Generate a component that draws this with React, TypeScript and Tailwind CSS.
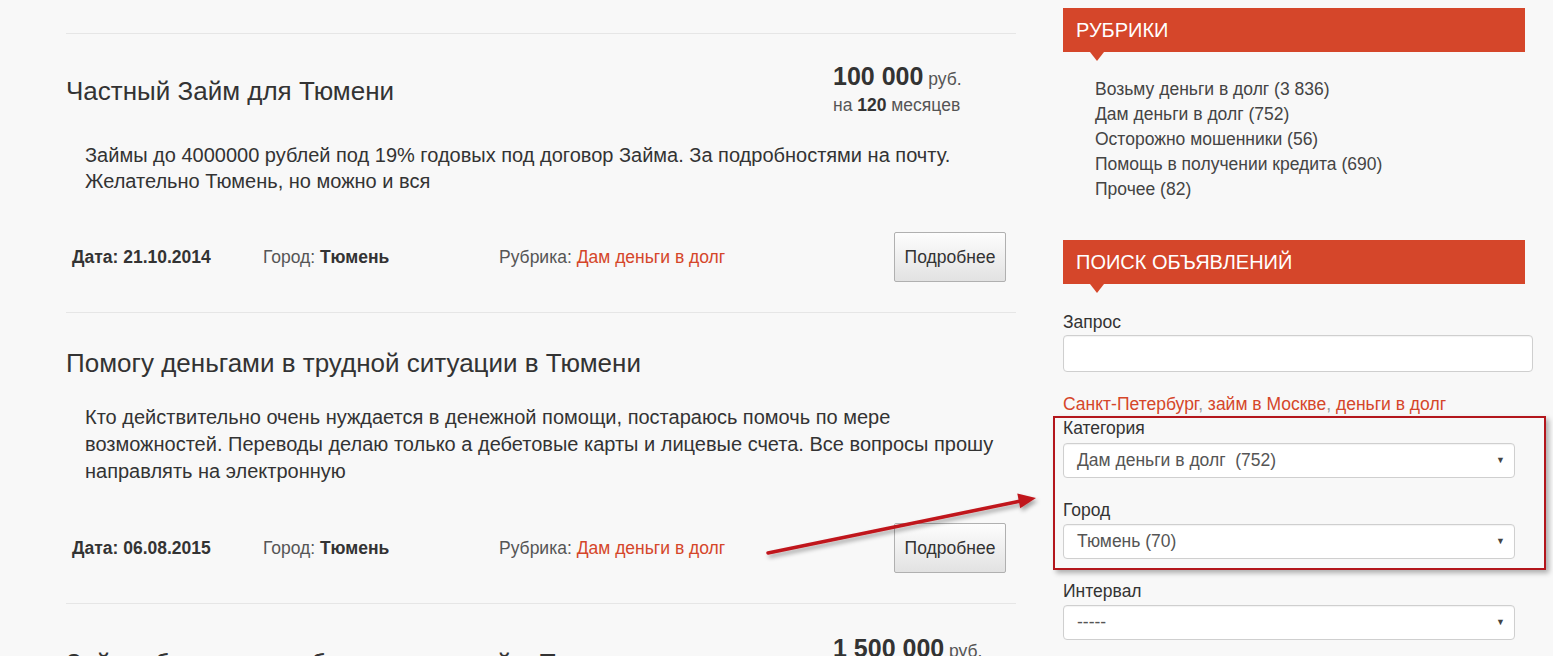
import React from "react";

const RED = "text-[#d5462a]";

function Price({ amount, months }: { amount: string; months?: string }) {
  return (
    <div className="w-[183px] shrink-0 text-[#333]">
      <div className="leading-[24px] whitespace-nowrap">
        <span className="text-[25px] font-bold">{amount}</span>
        <span className="text-[17.5px] text-[#555]"> руб.</span>
      </div>
      {months && (
        <div className="text-[17.5px] leading-[26px] text-[#555] whitespace-nowrap">
          на <b className="text-[#333]">{months}</b> месяцев
        </div>
      )}
    </div>
  );
}

function Meta({ date }: { date: string }) {
  return (
    <div className="mt-[38px] flex h-[50px] items-center pl-[6px] pr-[10px] text-[17.5px] text-[#333]">
      <div className="w-[191px] font-bold">Дата: {date}</div>
      <div className="w-[236px] text-[#555]">
        Город: <b className="text-[#333]">Тюмень</b>
      </div>
      <div className="flex-1 text-[#555]">
        Рубрика: <span className={RED}>Дам деньги в долг</span>
      </div>
      <button className="h-[50px] w-[112px] rounded-[2px] border border-[#b0b0b0] bg-gradient-to-b from-[#fdfdfd] to-[#e2e2e2] text-[17.5px] text-[#333]">
        Подробнее
      </button>
    </div>
  );
}

function Select({ value }: { value: string }) {
  return (
    <div className="flex h-[35px] w-[452px] items-center justify-between rounded-[4px] border border-[#cfcfcf] bg-white pl-[13px] pr-[9px] text-[17.5px] text-[#555] shadow-[inset_0_1px_1px_rgba(0,0,0,0.05)]">
      <span className="whitespace-pre">{value}</span>
      <span className="text-[9px] text-[#444]">▼</span>
    </div>
  );
}

function Header({ title }: { title: string }) {
  return (
    <div className="relative flex h-[44px] w-[462px] items-center bg-[#d5462a] pl-[13px] text-[20px] text-white">
      {title}
      <div className="absolute left-[27px] top-[44px] h-0 w-0 border-l-[7px] border-r-[7px] border-t-[9px] border-l-transparent border-r-transparent border-t-[#d5462a]" />
    </div>
  );
}

export default function App() {
  return (
    <div className="relative flex h-[656px] w-[1553px] overflow-hidden bg-[#f8f8f8] font-['Liberation_Sans',Arial,sans-serif] text-[#333]">
      {/* Left column */}
      <div className="ml-[66px] w-[950px] shrink-0">
        <div className="h-[33px]" />
        {/* Item 1 */}
        <div className="border-t border-[#e6e6e6] pt-[32px]">
          <div className="flex h-[50px] items-center">
            <h2 className="flex-1 text-[26px] leading-[30px] text-[#333]">Частный Займ для Тюмени</h2>
            <Price amount="100 000" months="120" />
          </div>
          <p className="mt-[26px] pl-[19px] pr-[4px] text-[20px] leading-[26px] text-[#333]">
            Займы до 4000000 рублей под 19% годовых под договор Займа. За подробностями на почту. Желательно Тюмень, но можно и вся
          </p>
          <Meta date="21.10.2014" />
          <div className="h-[30px]" />
        </div>
        {/* Item 2 */}
        <div className="border-t border-[#e6e6e6] pt-[35px]">
          <h2 className="text-[26px] leading-[30px] text-[#333]">Помогу деньгами в трудной ситуации в Тюмени</h2>
          <p className="mt-[26px] pl-[19px] pr-[4px] text-[20px] leading-[27px] text-[#333]">
            Кто действительно очень нуждается в денежной помощи, постараюсь помочь по мере возможностей. Переводы делаю только а дебетовые карты и лицевые счета. Все вопросы прошу направлять на электронную
          </p>
          <Meta date="06.08.2015" />
          <div className="h-[30px]" />
        </div>
        {/* Item 3 */}
        <div className="border-t border-[#e6e6e6] pt-[32px]">
          <div className="flex h-[54px] items-center">
            <h2 className="flex-1 text-[26px] leading-[30px] text-[#333]">Займы без залога и без поручителей в Тюмени</h2>
            <Price amount="1 500 000" months="60" />
          </div>
        </div>
      </div>

      {/* Right column */}
      <div className="ml-[47px] w-[470px] shrink-0 pt-[8px]">
        <Header title="РУБРИКИ" />
        <ul className="mt-[25px] pl-[32px] text-[17.5px] leading-[25px] text-[#444]">
          <li>Возьму деньги в долг (3 836)</li>
          <li>Дам деньги в долг (752)</li>
          <li>Осторожно мошенники (56)</li>
          <li>Помощь в получении кредита (690)</li>
          <li>Прочее (82)</li>
        </ul>
        <div className="mt-[38px]">
          <Header title="ПОИСК ОБЪЯВЛЕНИЙ" />
        </div>
        <div className="mt-[27px] text-[17.5px] leading-[22px] text-[#333]">Запрос</div>
        <div className="mt-[2px] h-[37px] w-[470px] rounded-[4px] border border-[#cfcfcf] bg-white shadow-[inset_0_1px_1px_rgba(0,0,0,0.05)]" />
        <div className="mt-[21px] text-[17.5px] leading-[22px] text-[#999]">
          <span className={RED}>Санкт-Петербург</span>, <span className={RED}>займ в Москве</span>,{" "}
          <span className={RED}>деньги в долг</span>
        </div>
        <div className="mt-[2px] text-[17.5px] leading-[22px] text-[#333]">Категория</div>
        <div className="mt-[4px]">
          <Select value="Дам деньги в долг  (752)" />
        </div>
        <div className="mt-[21px] text-[17.5px] leading-[22px] text-[#333]">Город</div>
        <div className="mt-[3px]">
          <Select value="Тюмень (70)" />
        </div>
        <div className="mt-[21px] text-[17.5px] leading-[22px] text-[#333]">Интервал</div>
        <div className="mt-[3px]">
          <Select value="-----" />
        </div>
      </div>

      {/* Annotation rectangle */}
      <div className="absolute left-[1053px] top-[416px] h-[154px] w-[493px] border-2 border-[#b3161c] shadow-[3px_3px_5px_rgba(0,0,0,0.3)]" />

      {/* Annotation arrow */}
      <svg className="pointer-events-none absolute left-0 top-0" width="1553" height="656">
        <defs>
          <filter id="sh" x="-10%" y="-50%" width="120%" height="200%">
            <feDropShadow dx="2" dy="3" stdDeviation="2" floodColor="#000" floodOpacity="0.35" />
          </filter>
        </defs>
        <g filter="url(#sh)">
          <line x1="768" y1="553" x2="1022" y2="500.7" stroke="#c0161c" strokeWidth="3.5" strokeLinecap="round" />
          <polygon points="1036,498 1020.2,508.2 1017.3,493.5" fill="#c0161c" />
        </g>
      </svg>
    </div>
  );
}
